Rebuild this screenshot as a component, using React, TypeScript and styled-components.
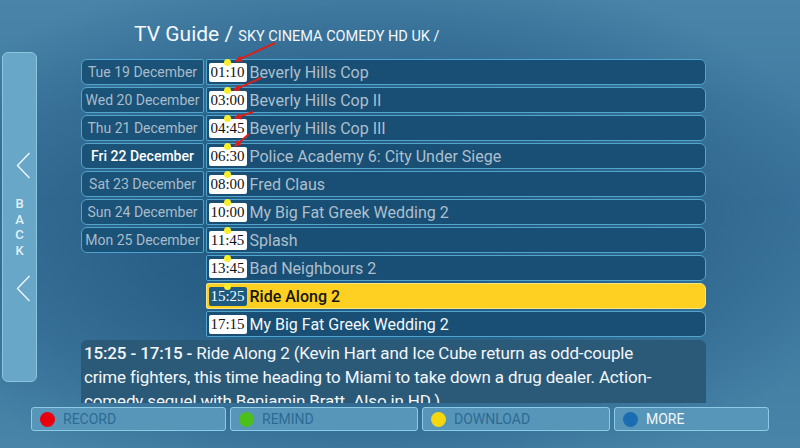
import React from "react";
import styled, { createGlobalStyle } from "styled-components";

const GlobalStyle = createGlobalStyle`
  html, body {
    margin: 0;
    padding: 0;
    background: #3c77a0;
  }
  * {
    box-sizing: border-box;
  }
`;

const dates = [
  "Tue 19 December",
  "Wed 20 December",
  "Thu 21 December",
  "Fri 22 December",
  "Sat 23 December",
  "Sun 24 December",
  "Mon 25 December",
];

const programs = [
  { time: "01:10", title: "Beverly Hills Cop" },
  { time: "03:00", title: "Beverly Hills Cop II" },
  { time: "04:45", title: "Beverly Hills Cop III" },
  { time: "06:30", title: "Police Academy 6: City Under Siege" },
  { time: "08:00", title: "Fred Claus" },
  { time: "10:00", title: "My Big Fat Greek Wedding 2" },
  { time: "11:45", title: "Splash" },
  { time: "13:45", title: "Bad Neighbours 2" },
  { time: "15:25", title: "Ride Along 2" },
  { time: "17:15", title: "My Big Fat Greek Wedding 2" },
];

const activeDate = 3;
const selected = 8;

const buttons = [
  { label: "RECORD", color: "#e8000f", width: 195, on: false },
  { label: "REMIND", color: "#4dbf1a", width: 188, on: false },
  { label: "DOWNLOAD", color: "#f4d70f", width: 188, on: false },
  { label: "MORE", color: "#1a6db0", width: 155, on: true },
];

// red pointer arrows from the header down to the first time markers
const pointers = [
  [275, 43, 236, 61],
  [261, 78, 234, 90],
  [253, 112, 235, 118],
  [249, 134, 235, 146],
];

function App() {
  return (
    <>
      <GlobalStyle />
      <Screen>
        <Top>
          <BackPanel>
            <Chevron />
            <BackLabel>
              <span>B</span>
              <span>A</span>
              <span>C</span>
              <span>K</span>
            </BackLabel>
            <Chevron />
          </BackPanel>

          <Content>
            <Title>
              TV Guide / <small>SKY CINEMA COMEDY HD UK /</small>
            </Title>

            <Schedule>
              <DateColumn>
                {dates.map((d, i) => (
                  <DateCell key={d} $active={i === activeDate}>
                    {d}
                  </DateCell>
                ))}
              </DateColumn>
              <ProgramColumn>
                {programs.map((p, i) => (
                  <ProgramRow key={p.time} $selected={i === selected}>
                    <TimeBox $selected={i === selected}>
                      {p.time}
                      {i < 9 && <Dot />}
                    </TimeBox>
                    <ProgramTitle
                      $selected={i === selected}
                      $next={i === selected + 1}
                    >
                      {p.title}
                    </ProgramTitle>
                  </ProgramRow>
                ))}
              </ProgramColumn>
            </Schedule>

            <Description>
              <Line>
                <b>15:25 - 17:15 - </b>Ride Along 2 (Kevin Hart and Ice Cube
                return as odd-couple
              </Line>
              <Line>
                crime fighters, this time heading to Miami to take down a drug
                dealer. Action-
              </Line>
              <Line>comedy sequel with Benjamin Bratt. Also in HD.)</Line>
            </Description>
          </Content>
        </Top>

        <Footer>
          {buttons.map((b) => (
            <ActionButton key={b.label} style={{ width: b.width }}>
              <Bullet style={{ background: b.color }} />
              <ActionLabel $on={b.on}>{b.label}</ActionLabel>
            </ActionButton>
          ))}
        </Footer>

        <Pointers width="800" height="448" viewBox="0 0 800 448">
          <defs>
            <marker
              id="head"
              markerWidth="7"
              markerHeight="7"
              refX="6"
              refY="3.5"
              orient="auto"
              markerUnits="userSpaceOnUse"
            >
              <path d="M0,0 L7,3.5 L0,7 z" fill="#d8211c" />
            </marker>
          </defs>
          {pointers.map(([x1, y1, x2, y2], i) => (
            <line
              key={i}
              x1={x1}
              y1={y1}
              x2={x2}
              y2={y2}
              stroke="#d8211c"
              strokeWidth="2"
              markerEnd="url(#head)"
            />
          ))}
        </Pointers>
      </Screen>
    </>
  );
}

function Chevron() {
  return (
    <ChevronIcon width="15" height="27" viewBox="0 0 15 27">
      <polyline
        points="13.5,1 1.5,13.5 13.5,26"
        fill="none"
        stroke="#eef6fa"
        strokeWidth="1.4"
      />
    </ChevronIcon>
  );
}

const Screen = styled.div`
  position: relative;
  width: 800px;
  height: 448px;
  overflow: hidden;
  font-family: Roboto, "Liberation Sans", sans-serif;
  background:
    radial-gradient(ellipse 62% 62% at 46% 52%, #1e5479 0%, #2a6189 45%, rgba(74, 132, 167, 0) 100%),
    linear-gradient(180deg, #4a85a9 0%, #3a739b 45%, #4884a8 100%);
`;

const Top = styled.div`
  display: flex;
  align-items: flex-start;
`;

const BackPanel = styled.div`
  margin: 52px 0 0 2px;
  width: 35px;
  height: 330px;
  border: 1px solid #8cc5de;
  border-radius: 6px;
  background: #68a7c7;
  display: flex;
  flex-direction: column;
  align-items: center;
  padding-top: 99px;
`;

const ChevronIcon = styled.svg`
  display: block;
  margin-left: 7px;
`;

const BackLabel = styled.div`
  display: flex;
  flex-direction: column;
  align-items: center;
  margin: 17px 0 17px;
  font-size: 13px;
  line-height: 15.6px;
  font-weight: 500;
  color: #e2f1f8;
  span {
    display: block;
  }
`;

const Content = styled.div`
  margin-left: 44px;
  width: 625px;
`;

const Title = styled.div`
  padding: 22px 0 0 53px;
  height: 59px;
  font-size: 21px;
  line-height: 24px;
  color: #f4f8fb;
  small {
    font-size: 14.5px;
  }
`;

const Schedule = styled.div`
  display: flex;
  gap: 2px;
`;

const DateColumn = styled.div`
  width: 123px;
  display: flex;
  flex-direction: column;
  gap: 2px;
`;

const DateCell = styled.div<{ $active: boolean }>`
  height: 26px;
  border: 1.5px solid #4fa5cb;
  border-radius: 6px 2px 2px 6px;
  background: #1b5277;
  display: flex;
  align-items: center;
  justify-content: center;
  font-size: 14px;
  color: ${(p) => (p.$active ? "#ffffff" : "#a8bccb")};
  font-weight: ${(p) => (p.$active ? 500 : 400)};
`;

const ProgramColumn = styled.div`
  width: 500px;
  display: flex;
  flex-direction: column;
  gap: 2px;
`;

const ProgramRow = styled.div<{ $selected: boolean }>`
  height: 26px;
  border: 1.5px solid ${(p) => (p.$selected ? "#f3e48a" : "#4fa5cb")};
  border-radius: 2px 6px 6px 2px;
  background: ${(p) => (p.$selected ? "#fdd021" : "#194f74")};
  display: flex;
  align-items: center;
  padding-left: 1.5px;
`;

const TimeBox = styled.span<{ $selected: boolean }>`
  position: relative;
  height: 19px;
  width: 38px;
  border-radius: 2px;
  background: ${(p) => (p.$selected ? "#1d5b82" : "#ffffff")};
  color: ${(p) => (p.$selected ? "#ffffff" : "#111111")};
  font-family: "Liberation Serif", serif;
  font-size: 15px;
  line-height: 19px;
  text-align: center;
`;

const Dot = styled.i`
  position: absolute;
  top: -4px;
  left: 15px;
  width: 7px;
  height: 7px;
  border-radius: 50%;
  background: #faee2c;
`;

const ProgramTitle = styled.span<{ $selected: boolean; $next: boolean }>`
  margin-left: 3px;
  font-size: 16px;
  font-weight: ${(p) => (p.$selected ? 500 : 400)};
  color: ${(p) => (p.$selected ? "#151515" : p.$next ? "#f4f7fa" : "#adbfcd")};
`;

const Description = styled.div`
  margin-top: 3px;
  height: 63px;
  overflow: hidden;
  border-radius: 6px 6px 0 0;
  background: #2b5a79;
  padding: 1px 0 0 3px;
  color: #f3f6f8;
  font-size: 17px;
  line-height: 24px;
  letter-spacing: -0.15px;
  b {
    font-weight: 500;
  }
`;

const Line = styled.div`
  white-space: nowrap;
`;

const Footer = styled.div`
  display: flex;
  gap: 4px;
  margin: 4px 0 0 31px;
`;

const ActionButton = styled.div`
  height: 24px;
  border: 1px solid #8ccbe5;
  border-radius: 3px;
  background: #5896b9;
  display: flex;
  align-items: center;
  padding-left: 8px;
  gap: 8px;
`;

const Bullet = styled.span`
  width: 15px;
  height: 15px;
  border-radius: 50%;
`;

const ActionLabel = styled.span<{ $on: boolean }>`
  font-size: 14px;
  color: ${(p) => (p.$on ? "#eef6fa" : "#2c6b95")};
`;

const Pointers = styled.svg`
  position: absolute;
  left: 0;
  top: 0;
  pointer-events: none;
`;

export default App;
